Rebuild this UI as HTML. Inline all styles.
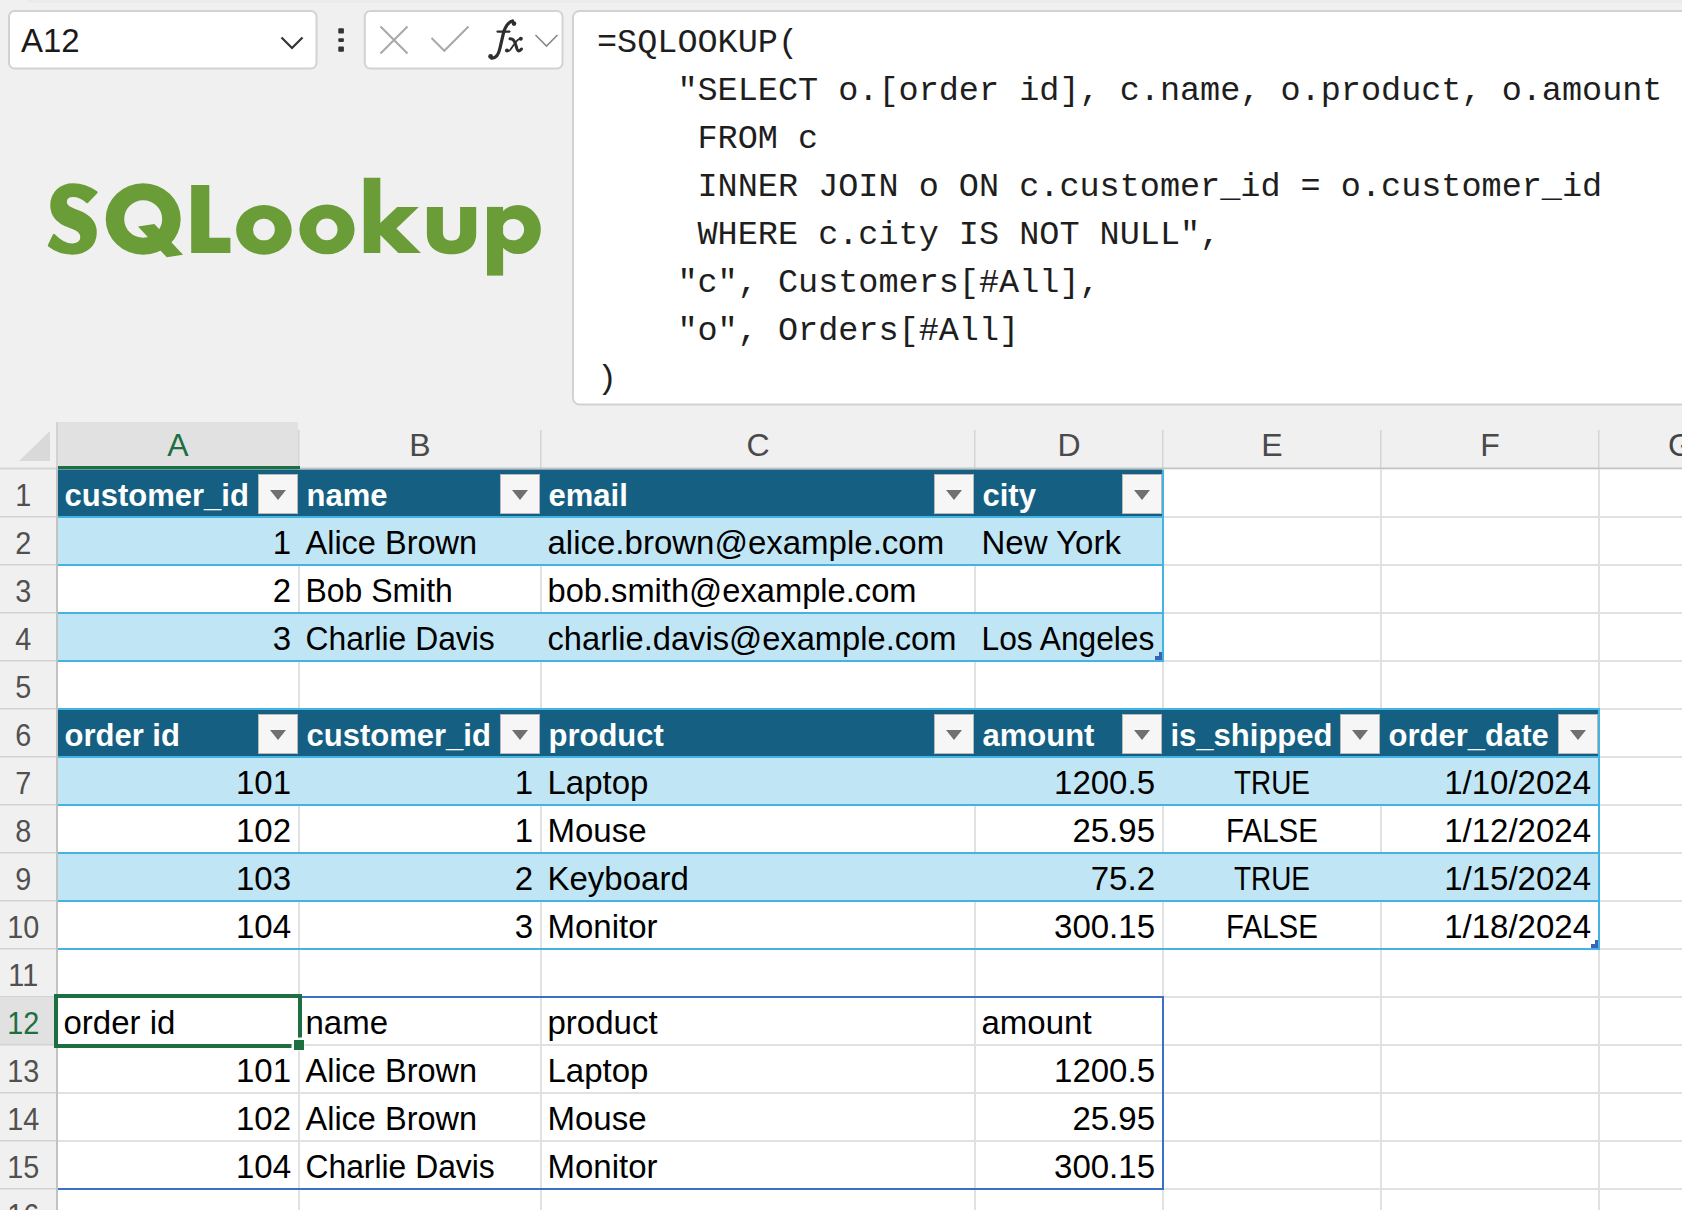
<!DOCTYPE html>
<html><head><meta charset="utf-8"><style>
html,body{margin:0;padding:0;background:#f0f0f0;overflow:hidden;width:1682px;height:1210px;font-family:"Liberation Sans",sans-serif}
svg{display:block}
</style></head><body>
<svg width="1682" height="1210" viewBox="0 0 1682 1210">
<rect x="0" y="0" width="1682" height="1210" fill="#f0f0f0"/>
<rect x="28" y="0" width="1654" height="3" fill="#ebebeb"/>
<rect x="9" y="11" width="307.5" height="57.5" rx="5.5" fill="#fff" stroke="#d2d2d2" stroke-width="2"/>
<text x="21" y="52" font-family='"Liberation Sans", sans-serif' font-size="33" fill="#1a1a1a">A12</text>
<polyline points="281.5,37.5 292,48 302.5,37.5" fill="none" stroke="#333" stroke-width="2.2"/>
<rect x="338.3" y="28.3" width="5.6" height="5.2" rx="0.8" fill="#333"/>
<rect x="338.3" y="38.3" width="5.6" height="3.6" rx="0.8" fill="#333"/>
<rect x="338.3" y="46.6" width="5.6" height="5.2" rx="0.8" fill="#333"/>
<rect x="364.8" y="11" width="197.7" height="57.5" rx="5.5" fill="#fff" stroke="#d2d2d2" stroke-width="2"/>
<path d="M380.5,26.5 L407.5,53.5 M407.5,26.5 L380.5,53.5" stroke="#a8a8a8" stroke-width="2" fill="none"/>
<polyline points="431.5,38 444.3,50.8 468.5,26.5" fill="none" stroke="#a8a8a8" stroke-width="2"/>
<g fill="none" stroke="#2e2e2e" stroke-linecap="round"><path d="M512.5,21 C507,22.5 504.5,28 503,35 L500,48 C498.5,55 496,58.5 491.5,58" stroke-width="3.3"/><path d="M497.5,31.6 L509.5,31.6" stroke-width="2.2"/><path d="M510,38.8 C513,38.5 514.5,41 515.5,44 L517,49 C518,51.5 519.5,51.5 521.5,49" stroke-width="3"/><path d="M520.5,38.6 C518,39 516,41.5 514,44.5 L510.5,49.5 C509,51.5 507.5,51.5 506.5,50.5" stroke-width="1.8"/></g><g fill="#2e2e2e"><circle cx="514" cy="23.6" r="2.3"/><circle cx="490.6" cy="56.4" r="2.4"/><circle cx="520.8" cy="38.7" r="2"/><circle cx="507" cy="50.6" r="2"/></g>
<polyline points="535.5,35 546.5,46 557.5,35" fill="none" stroke="#888" stroke-width="1.6"/>
<rect x="573" y="11" width="1200" height="393.5" rx="6.5" fill="#fff" stroke="#d2d2d2" stroke-width="2"/>
<text x="597" y="51.5" font-family='"Liberation Mono", monospace' font-size="33.5" fill="#1e1e1e" xml:space="preserve">=SQLOOKUP(</text>
<text x="597" y="99.5" font-family='"Liberation Mono", monospace' font-size="33.5" fill="#1e1e1e" xml:space="preserve">&#160;&#160;&#160;&#160;&quot;SELECT&#160;o.[order&#160;id],&#160;c.name,&#160;o.product,&#160;o.amount</text>
<text x="597" y="147.5" font-family='"Liberation Mono", monospace' font-size="33.5" fill="#1e1e1e" xml:space="preserve">&#160;&#160;&#160;&#160;&#160;FROM&#160;c</text>
<text x="597" y="195.5" font-family='"Liberation Mono", monospace' font-size="33.5" fill="#1e1e1e" xml:space="preserve">&#160;&#160;&#160;&#160;&#160;INNER&#160;JOIN&#160;o&#160;ON&#160;c.customer_id&#160;=&#160;o.customer_id</text>
<text x="597" y="243.5" font-family='"Liberation Mono", monospace' font-size="33.5" fill="#1e1e1e" xml:space="preserve">&#160;&#160;&#160;&#160;&#160;WHERE&#160;c.city&#160;IS&#160;NOT&#160;NULL&quot;,</text>
<text x="597" y="291.5" font-family='"Liberation Mono", monospace' font-size="33.5" fill="#1e1e1e" xml:space="preserve">&#160;&#160;&#160;&#160;&quot;c&quot;,&#160;Customers[#All],</text>
<text x="597" y="339.5" font-family='"Liberation Mono", monospace' font-size="33.5" fill="#1e1e1e" xml:space="preserve">&#160;&#160;&#160;&#160;&quot;o&quot;,&#160;Orders[#All]</text>
<text x="597" y="387.5" font-family='"Liberation Mono", monospace' font-size="33.5" fill="#1e1e1e" xml:space="preserve">)</text>
<path d="M95,192 C86,186 77,183 67,183 C53,183 41,192 41,207 C41,219 48,226 62,231 C72,235 77,236 77,244 C77,249 72,252 66,252 C58,252 50,247 44,241 L38,253 C46,259 56,262 66,262 C82,262 94,253 94,238 C94,226 87,219 73,214 C62,210 58,208 58,203 C58,198 62,196 67,196 C73,196 79,199 84,203 Z" fill="#6a9c37" stroke="#6a9c37" stroke-width="2.9" stroke-linejoin="round" transform="translate(17.37,24.57) scale(0.832,0.8736)"/>
<path d="M105.69999999999999,219 a37.5,35.8 0 1,0 75.0,0 a37.5,35.8 0 1,0 -75.0,0 Z M124.19999999999999,219 a19,18.8 0 1,0 38,0 a19,18.8 0 1,0 -38,0 Z" fill="#6a9c37" fill-rule="evenodd"/>
<polygon points="138,226.4 154.4,224 183,254.7 166.8,257.3" fill="#6a9c37"/>
<polygon points="191.2,185 209.3,185 209.3,237.7 230.4,237.7 230.4,253 191.2,253" fill="#6a9c37"/>
<path d="M236.09999999999997,229.9 a27.8,24.8 0 1,0 55.6,0 a27.8,24.8 0 1,0 -55.6,0 Z M252.99999999999997,229.5 a10.9,10.8 0 1,0 21.8,0 a10.9,10.8 0 1,0 -21.8,0 Z" fill="#6a9c37" fill-rule="evenodd"/>
<path d="M299.4,229.4 a27.6,24.9 0 1,0 55.2,0 a27.6,24.9 0 1,0 -55.2,0 Z M316.1,229.4 a10.7,10.9 0 1,0 21.4,0 a10.7,10.9 0 1,0 -21.4,0 Z" fill="#6a9c37" fill-rule="evenodd"/>
<polygon points="363.8,177.7 380.3,177.7 380.3,223 397.2,206.9 418.8,206.9 396.4,228.6 421,253 398.3,253 380.3,235 380.3,253 363.8,253" fill="#6a9c37"/>
<path d="M426.9,206.9 L442.9,206.9 L442.9,232 C442.9,238 446,240.6 451.5,240.6 C457,240.6 460.1,238 460.1,232 L460.1,206.9 L476.2,206.9 L476.2,234 C476.2,247 466,254.3 451.5,254.3 C437,254.3 426.9,247 426.9,234 Z" fill="#6a9c37"/>
<path d="M495.2,229.5 a22.8,24.5 0 1,0 45.6,0 a22.8,24.5 0 1,0 -45.6,0 Z M502.30000000000007,229.6 a10.9,10.7 0 1,0 21.8,0 a10.9,10.7 0 1,0 -21.8,0 Z" fill="#6a9c37" fill-rule="evenodd"/>
<rect x="487" y="206.9" width="16.1" height="68.7" fill="#6a9c37"/>
<rect x="56" y="422" width="1626" height="46" fill="#f0f0f0"/>
<rect x="58" y="422" width="240" height="46" fill="#e1e1e1"/>
<polygon points="19,461 50,461 50,431" fill="#d9d9d9"/>
<rect x="298" y="430" width="1.5" height="38" fill="#d4d4d4"/>
<rect x="540" y="430" width="1.5" height="38" fill="#d4d4d4"/>
<rect x="974" y="430" width="1.5" height="38" fill="#d4d4d4"/>
<rect x="1162" y="430" width="1.5" height="38" fill="#d4d4d4"/>
<rect x="1380" y="430" width="1.5" height="38" fill="#d4d4d4"/>
<rect x="1598" y="430" width="1.5" height="38" fill="#d4d4d4"/>
<rect x="56" y="422" width="2" height="46" fill="#d2d2d2"/>
<rect x="56" y="468" width="2" height="742" fill="#c2c2c2"/>
<rect x="0" y="467.5" width="56" height="2" fill="#d6d6d6"/>
<rect x="56" y="467.5" width="1626" height="2" fill="#c4c4c4"/>
<text x="178.0" y="456" text-anchor="middle" font-family='"Liberation Sans", sans-serif' font-size="32" fill="#1d6f42">A</text>
<text x="420.0" y="456" text-anchor="middle" font-family='"Liberation Sans", sans-serif' font-size="32" fill="#4a4a4a">B</text>
<text x="758.0" y="456" text-anchor="middle" font-family='"Liberation Sans", sans-serif' font-size="32" fill="#4a4a4a">C</text>
<text x="1069.0" y="456" text-anchor="middle" font-family='"Liberation Sans", sans-serif' font-size="32" fill="#4a4a4a">D</text>
<text x="1272.0" y="456" text-anchor="middle" font-family='"Liberation Sans", sans-serif' font-size="32" fill="#4a4a4a">E</text>
<text x="1490.0" y="456" text-anchor="middle" font-family='"Liberation Sans", sans-serif' font-size="32" fill="#4a4a4a">F</text>
<text x="1668" y="456" font-family='"Liberation Sans", sans-serif' font-size="32" fill="#444">G</text>
<rect x="58" y="466" width="242" height="3.5" fill="#1d6f42"/>
<rect x="58" y="469.5" width="1624" height="740.5" fill="#fff"/>
<rect x="0" y="516" width="56" height="1.5" fill="#d2d2d2"/>
<text x="23.2" y="506" text-anchor="middle" font-family='"Liberation Sans", sans-serif' font-size="32" fill="#505050" transform="translate(23.2,0) scale(0.9,1) translate(-23.2,0)">1</text>
<rect x="0" y="564" width="56" height="1.5" fill="#d2d2d2"/>
<text x="23.2" y="554" text-anchor="middle" font-family='"Liberation Sans", sans-serif' font-size="32" fill="#505050" transform="translate(23.2,0) scale(0.9,1) translate(-23.2,0)">2</text>
<rect x="0" y="612" width="56" height="1.5" fill="#d2d2d2"/>
<text x="23.2" y="602" text-anchor="middle" font-family='"Liberation Sans", sans-serif' font-size="32" fill="#505050" transform="translate(23.2,0) scale(0.9,1) translate(-23.2,0)">3</text>
<rect x="0" y="660" width="56" height="1.5" fill="#d2d2d2"/>
<text x="23.2" y="650" text-anchor="middle" font-family='"Liberation Sans", sans-serif' font-size="32" fill="#505050" transform="translate(23.2,0) scale(0.9,1) translate(-23.2,0)">4</text>
<rect x="0" y="708" width="56" height="1.5" fill="#d2d2d2"/>
<text x="23.2" y="698" text-anchor="middle" font-family='"Liberation Sans", sans-serif' font-size="32" fill="#505050" transform="translate(23.2,0) scale(0.9,1) translate(-23.2,0)">5</text>
<rect x="0" y="756" width="56" height="1.5" fill="#d2d2d2"/>
<text x="23.2" y="746" text-anchor="middle" font-family='"Liberation Sans", sans-serif' font-size="32" fill="#505050" transform="translate(23.2,0) scale(0.9,1) translate(-23.2,0)">6</text>
<rect x="0" y="804" width="56" height="1.5" fill="#d2d2d2"/>
<text x="23.2" y="794" text-anchor="middle" font-family='"Liberation Sans", sans-serif' font-size="32" fill="#505050" transform="translate(23.2,0) scale(0.9,1) translate(-23.2,0)">7</text>
<rect x="0" y="852" width="56" height="1.5" fill="#d2d2d2"/>
<text x="23.2" y="842" text-anchor="middle" font-family='"Liberation Sans", sans-serif' font-size="32" fill="#505050" transform="translate(23.2,0) scale(0.9,1) translate(-23.2,0)">8</text>
<rect x="0" y="900" width="56" height="1.5" fill="#d2d2d2"/>
<text x="23.2" y="890" text-anchor="middle" font-family='"Liberation Sans", sans-serif' font-size="32" fill="#505050" transform="translate(23.2,0) scale(0.9,1) translate(-23.2,0)">9</text>
<rect x="0" y="948" width="56" height="1.5" fill="#d2d2d2"/>
<text x="23.2" y="938" text-anchor="middle" font-family='"Liberation Sans", sans-serif' font-size="32" fill="#505050" transform="translate(23.2,0) scale(0.9,1) translate(-23.2,0)">10</text>
<rect x="0" y="996" width="56" height="1.5" fill="#d2d2d2"/>
<text x="23.2" y="986" text-anchor="middle" font-family='"Liberation Sans", sans-serif' font-size="32" fill="#505050" transform="translate(23.2,0) scale(0.9,1) translate(-23.2,0)">11</text>
<rect x="0" y="998" width="56" height="46" fill="#e1e1e1"/>
<rect x="0" y="1044" width="56" height="1.5" fill="#d2d2d2"/>
<text x="23.2" y="1034" text-anchor="middle" font-family='"Liberation Sans", sans-serif' font-size="32" fill="#1d6f42" transform="translate(23.2,0) scale(0.9,1) translate(-23.2,0)">12</text>
<rect x="0" y="1092" width="56" height="1.5" fill="#d2d2d2"/>
<text x="23.2" y="1082" text-anchor="middle" font-family='"Liberation Sans", sans-serif' font-size="32" fill="#505050" transform="translate(23.2,0) scale(0.9,1) translate(-23.2,0)">13</text>
<rect x="0" y="1140" width="56" height="1.5" fill="#d2d2d2"/>
<text x="23.2" y="1130" text-anchor="middle" font-family='"Liberation Sans", sans-serif' font-size="32" fill="#505050" transform="translate(23.2,0) scale(0.9,1) translate(-23.2,0)">14</text>
<rect x="0" y="1188" width="56" height="1.5" fill="#d2d2d2"/>
<text x="23.2" y="1178" text-anchor="middle" font-family='"Liberation Sans", sans-serif' font-size="32" fill="#505050" transform="translate(23.2,0) scale(0.9,1) translate(-23.2,0)">15</text>
<rect x="0" y="1236" width="56" height="1.5" fill="#d2d2d2"/>
<text x="23.2" y="1226" text-anchor="middle" font-family='"Liberation Sans", sans-serif' font-size="32" fill="#505050" transform="translate(23.2,0) scale(0.9,1) translate(-23.2,0)">16</text>
<rect x="298" y="469" width="2" height="741" fill="#e1e1e1"/>
<rect x="540" y="469" width="2" height="741" fill="#e1e1e1"/>
<rect x="974" y="469" width="2" height="741" fill="#e1e1e1"/>
<rect x="1162" y="469" width="2" height="741" fill="#e1e1e1"/>
<rect x="1380" y="469" width="2" height="741" fill="#e1e1e1"/>
<rect x="1598" y="469" width="2" height="741" fill="#e1e1e1"/>
<rect x="58" y="516" width="1624" height="2" fill="#e1e1e1"/>
<rect x="58" y="564" width="1624" height="2" fill="#e1e1e1"/>
<rect x="58" y="612" width="1624" height="2" fill="#e1e1e1"/>
<rect x="58" y="660" width="1624" height="2" fill="#e1e1e1"/>
<rect x="58" y="708" width="1624" height="2" fill="#e1e1e1"/>
<rect x="58" y="756" width="1624" height="2" fill="#e1e1e1"/>
<rect x="58" y="804" width="1624" height="2" fill="#e1e1e1"/>
<rect x="58" y="852" width="1624" height="2" fill="#e1e1e1"/>
<rect x="58" y="900" width="1624" height="2" fill="#e1e1e1"/>
<rect x="58" y="948" width="1624" height="2" fill="#e1e1e1"/>
<rect x="58" y="996" width="1624" height="2" fill="#e1e1e1"/>
<rect x="58" y="1044" width="1624" height="2" fill="#e1e1e1"/>
<rect x="58" y="1092" width="1624" height="2" fill="#e1e1e1"/>
<rect x="58" y="1140" width="1624" height="2" fill="#e1e1e1"/>
<rect x="58" y="1188" width="1624" height="2" fill="#e1e1e1"/>
<rect x="58" y="1236" width="1624" height="2" fill="#e1e1e1"/>
<rect x="58" y="469.5" width="1104" height="46.5" fill="#156082"/>
<rect x="58" y="518" width="1104" height="46" fill="#c0e6f5"/>
<rect x="58" y="614" width="1104" height="46" fill="#c0e6f5"/>
<rect x="58" y="516" width="1106" height="2" fill="#44b3e1"/>
<rect x="58" y="564" width="1106" height="2" fill="#44b3e1"/>
<rect x="58" y="612" width="1106" height="2" fill="#44b3e1"/>
<rect x="58" y="660" width="1106" height="2" fill="#44b3e1"/>
<rect x="1162" y="469.5" width="2" height="192.5" fill="#44b3e1"/>
<text x="64.50" y="506" font-family='"Liberation Sans", sans-serif' font-size="31" font-weight="bold" fill="#fff">customer_id</text>
<rect x="258.5" y="474.5" width="39" height="39" fill="#f6f6f6" stroke="#b9b9b9" stroke-width="1"/>
<polygon points="270,490 286,490 278,500" fill="#707070"/>
<text x="306.50" y="506" font-family='"Liberation Sans", sans-serif' font-size="31" font-weight="bold" fill="#fff">name</text>
<rect x="500.5" y="474.5" width="39" height="39" fill="#f6f6f6" stroke="#b9b9b9" stroke-width="1"/>
<polygon points="512,490 528,490 520,500" fill="#707070"/>
<text x="548.50" y="506" font-family='"Liberation Sans", sans-serif' font-size="31" font-weight="bold" fill="#fff">email</text>
<rect x="934.5" y="474.5" width="39" height="39" fill="#f6f6f6" stroke="#b9b9b9" stroke-width="1"/>
<polygon points="946,490 962,490 954,500" fill="#707070"/>
<text x="982.50" y="506" font-family='"Liberation Sans", sans-serif' font-size="31" font-weight="bold" fill="#fff">city</text>
<rect x="1122.5" y="474.5" width="39" height="39" fill="#f6f6f6" stroke="#b9b9b9" stroke-width="1"/>
<polygon points="1134,490 1150,490 1142,500" fill="#707070"/>
<text x="291.00" y="554" text-anchor="end" font-family='"Liberation Sans", sans-serif' font-size="33" fill="#000">1</text>
<text x="305.50" y="554" font-family='"Liberation Sans", sans-serif' font-size="33" fill="#000" transform="translate(305.50,0) scale(0.9850,1) translate(-305.50,0)">Alice Brown</text>
<text x="547.50" y="554" font-family='"Liberation Sans", sans-serif' font-size="33" fill="#000">alice.brown@example.com</text>
<text x="981.50" y="554" font-family='"Liberation Sans", sans-serif' font-size="33" fill="#000">New York</text>
<text x="291.00" y="602" text-anchor="end" font-family='"Liberation Sans", sans-serif' font-size="33" fill="#000">2</text>
<text x="305.50" y="602" font-family='"Liberation Sans", sans-serif' font-size="33" fill="#000" transform="translate(305.50,0) scale(0.9680,1) translate(-305.50,0)">Bob Smith</text>
<text x="547.50" y="602" font-family='"Liberation Sans", sans-serif' font-size="33" fill="#000" transform="translate(547.50,0) scale(0.9900,1) translate(-547.50,0)">bob.smith@example.com</text>
<text x="291.00" y="650" text-anchor="end" font-family='"Liberation Sans", sans-serif' font-size="33" fill="#000">3</text>
<text x="305.50" y="650" font-family='"Liberation Sans", sans-serif' font-size="33" fill="#000" transform="translate(305.50,0) scale(0.9650,1) translate(-305.50,0)">Charlie Davis</text>
<text x="547.50" y="650" font-family='"Liberation Sans", sans-serif' font-size="33" fill="#000" transform="translate(547.50,0) scale(0.9900,1) translate(-547.50,0)">charlie.davis@example.com</text>
<text x="981.50" y="650" font-family='"Liberation Sans", sans-serif' font-size="33" fill="#000" transform="translate(981.50,0) scale(0.9620,1) translate(-981.50,0)">Los Angeles</text>
<path d="M1155,660 L1162,660 L1162,652 L1159,652 L1159,656 L1155,656 Z" fill="#3a62b5"/>
<rect x="58" y="709.5" width="1540" height="46.5" fill="#156082"/>
<rect x="58" y="758" width="1540" height="46" fill="#c0e6f5"/>
<rect x="58" y="854" width="1540" height="46" fill="#c0e6f5"/>
<rect x="58" y="708" width="1542" height="2" fill="#44b3e1"/>
<rect x="58" y="756" width="1542" height="2" fill="#44b3e1"/>
<rect x="58" y="804" width="1542" height="2" fill="#44b3e1"/>
<rect x="58" y="852" width="1542" height="2" fill="#44b3e1"/>
<rect x="58" y="900" width="1542" height="2" fill="#44b3e1"/>
<rect x="58" y="948" width="1542" height="2" fill="#44b3e1"/>
<rect x="1598" y="709.5" width="2" height="240.5" fill="#44b3e1"/>
<text x="64.50" y="746" font-family='"Liberation Sans", sans-serif' font-size="31" font-weight="bold" fill="#fff">order id</text>
<rect x="258.5" y="714.5" width="39" height="39" fill="#f6f6f6" stroke="#b9b9b9" stroke-width="1"/>
<polygon points="270,730 286,730 278,740" fill="#707070"/>
<text x="306.50" y="746" font-family='"Liberation Sans", sans-serif' font-size="31" font-weight="bold" fill="#fff">customer_id</text>
<rect x="500.5" y="714.5" width="39" height="39" fill="#f6f6f6" stroke="#b9b9b9" stroke-width="1"/>
<polygon points="512,730 528,730 520,740" fill="#707070"/>
<text x="548.50" y="746" font-family='"Liberation Sans", sans-serif' font-size="31" font-weight="bold" fill="#fff">product</text>
<rect x="934.5" y="714.5" width="39" height="39" fill="#f6f6f6" stroke="#b9b9b9" stroke-width="1"/>
<polygon points="946,730 962,730 954,740" fill="#707070"/>
<text x="982.50" y="746" font-family='"Liberation Sans", sans-serif' font-size="31" font-weight="bold" fill="#fff">amount</text>
<rect x="1122.5" y="714.5" width="39" height="39" fill="#f6f6f6" stroke="#b9b9b9" stroke-width="1"/>
<polygon points="1134,730 1150,730 1142,740" fill="#707070"/>
<text x="1170.50" y="746" font-family='"Liberation Sans", sans-serif' font-size="31" font-weight="bold" fill="#fff">is_shipped</text>
<rect x="1340.5" y="714.5" width="39" height="39" fill="#f6f6f6" stroke="#b9b9b9" stroke-width="1"/>
<polygon points="1352,730 1368,730 1360,740" fill="#707070"/>
<text x="1388.50" y="746" font-family='"Liberation Sans", sans-serif' font-size="31" font-weight="bold" fill="#fff">order_date</text>
<rect x="1558.5" y="714.5" width="39" height="39" fill="#f6f6f6" stroke="#b9b9b9" stroke-width="1"/>
<polygon points="1570,730 1586,730 1578,740" fill="#707070"/>
<text x="291.00" y="794" text-anchor="end" font-family='"Liberation Sans", sans-serif' font-size="33" fill="#000">101</text>
<text x="533.00" y="794" text-anchor="end" font-family='"Liberation Sans", sans-serif' font-size="33" fill="#000">1</text>
<text x="547.50" y="794" font-family='"Liberation Sans", sans-serif' font-size="33" fill="#000">Laptop</text>
<text x="1155.00" y="794" text-anchor="end" font-family='"Liberation Sans", sans-serif' font-size="33" fill="#000">1200.5</text>
<text x="1272.00" y="794" text-anchor="middle" font-family='"Liberation Sans", sans-serif' font-size="33" fill="#000" transform="translate(1272.00,0) scale(0.8450,1) translate(-1272.00,0)">TRUE</text>
<text x="1591.00" y="794" text-anchor="end" font-family='"Liberation Sans", sans-serif' font-size="33" fill="#000">1/10/2024</text>
<text x="291.00" y="842" text-anchor="end" font-family='"Liberation Sans", sans-serif' font-size="33" fill="#000">102</text>
<text x="533.00" y="842" text-anchor="end" font-family='"Liberation Sans", sans-serif' font-size="33" fill="#000">1</text>
<text x="547.50" y="842" font-family='"Liberation Sans", sans-serif' font-size="33" fill="#000">Mouse</text>
<text x="1155.00" y="842" text-anchor="end" font-family='"Liberation Sans", sans-serif' font-size="33" fill="#000">25.95</text>
<text x="1272.00" y="842" text-anchor="middle" font-family='"Liberation Sans", sans-serif' font-size="33" fill="#000" transform="translate(1272.00,0) scale(0.8950,1) translate(-1272.00,0)">FALSE</text>
<text x="1591.00" y="842" text-anchor="end" font-family='"Liberation Sans", sans-serif' font-size="33" fill="#000">1/12/2024</text>
<text x="291.00" y="890" text-anchor="end" font-family='"Liberation Sans", sans-serif' font-size="33" fill="#000">103</text>
<text x="533.00" y="890" text-anchor="end" font-family='"Liberation Sans", sans-serif' font-size="33" fill="#000">2</text>
<text x="547.50" y="890" font-family='"Liberation Sans", sans-serif' font-size="33" fill="#000">Keyboard</text>
<text x="1155.00" y="890" text-anchor="end" font-family='"Liberation Sans", sans-serif' font-size="33" fill="#000">75.2</text>
<text x="1272.00" y="890" text-anchor="middle" font-family='"Liberation Sans", sans-serif' font-size="33" fill="#000" transform="translate(1272.00,0) scale(0.8450,1) translate(-1272.00,0)">TRUE</text>
<text x="1591.00" y="890" text-anchor="end" font-family='"Liberation Sans", sans-serif' font-size="33" fill="#000">1/15/2024</text>
<text x="291.00" y="938" text-anchor="end" font-family='"Liberation Sans", sans-serif' font-size="33" fill="#000">104</text>
<text x="533.00" y="938" text-anchor="end" font-family='"Liberation Sans", sans-serif' font-size="33" fill="#000">3</text>
<text x="547.50" y="938" font-family='"Liberation Sans", sans-serif' font-size="33" fill="#000">Monitor</text>
<text x="1155.00" y="938" text-anchor="end" font-family='"Liberation Sans", sans-serif' font-size="33" fill="#000">300.15</text>
<text x="1272.00" y="938" text-anchor="middle" font-family='"Liberation Sans", sans-serif' font-size="33" fill="#000" transform="translate(1272.00,0) scale(0.8950,1) translate(-1272.00,0)">FALSE</text>
<text x="1591.00" y="938" text-anchor="end" font-family='"Liberation Sans", sans-serif' font-size="33" fill="#000">1/18/2024</text>
<path d="M1591,948 L1598,948 L1598,940 L1595,940 L1595,944 L1591,944 Z" fill="#3a62b5"/>
<text x="63.50" y="1034" font-family='"Liberation Sans", sans-serif' font-size="33" fill="#000">order id</text>
<text x="305.50" y="1034" font-family='"Liberation Sans", sans-serif' font-size="33" fill="#000">name</text>
<text x="547.50" y="1034" font-family='"Liberation Sans", sans-serif' font-size="33" fill="#000">product</text>
<text x="981.50" y="1034" font-family='"Liberation Sans", sans-serif' font-size="33" fill="#000">amount</text>
<text x="291.00" y="1082" text-anchor="end" font-family='"Liberation Sans", sans-serif' font-size="33" fill="#000">101</text>
<text x="305.50" y="1082" font-family='"Liberation Sans", sans-serif' font-size="33" fill="#000" transform="translate(305.50,0) scale(0.9850,1) translate(-305.50,0)">Alice Brown</text>
<text x="547.50" y="1082" font-family='"Liberation Sans", sans-serif' font-size="33" fill="#000">Laptop</text>
<text x="1155.00" y="1082" text-anchor="end" font-family='"Liberation Sans", sans-serif' font-size="33" fill="#000">1200.5</text>
<text x="291.00" y="1130" text-anchor="end" font-family='"Liberation Sans", sans-serif' font-size="33" fill="#000">102</text>
<text x="305.50" y="1130" font-family='"Liberation Sans", sans-serif' font-size="33" fill="#000" transform="translate(305.50,0) scale(0.9850,1) translate(-305.50,0)">Alice Brown</text>
<text x="547.50" y="1130" font-family='"Liberation Sans", sans-serif' font-size="33" fill="#000">Mouse</text>
<text x="1155.00" y="1130" text-anchor="end" font-family='"Liberation Sans", sans-serif' font-size="33" fill="#000">25.95</text>
<text x="291.00" y="1178" text-anchor="end" font-family='"Liberation Sans", sans-serif' font-size="33" fill="#000">104</text>
<text x="305.50" y="1178" font-family='"Liberation Sans", sans-serif' font-size="33" fill="#000" transform="translate(305.50,0) scale(0.9650,1) translate(-305.50,0)">Charlie Davis</text>
<text x="547.50" y="1178" font-family='"Liberation Sans", sans-serif' font-size="33" fill="#000">Monitor</text>
<text x="1155.00" y="1178" text-anchor="end" font-family='"Liberation Sans", sans-serif' font-size="33" fill="#000">300.15</text>
<rect x="300" y="996" width="864" height="2" fill="#3d6fc6"/>
<rect x="1162" y="996" width="2" height="194" fill="#3d6fc6"/>
<rect x="58" y="1188" width="1106" height="2" fill="#3d6fc6"/>
<path d="M54,994 H302 V1037.5 H298 V998 H58 V1044 H291.5 V1048 H54 Z" fill="#1d6f42"/>
<rect x="292.5" y="1038.5" width="12" height="12" fill="#fff"/>
<rect x="294" y="1040" width="10" height="10" fill="#1d6f42"/>
</svg>
</body></html>
